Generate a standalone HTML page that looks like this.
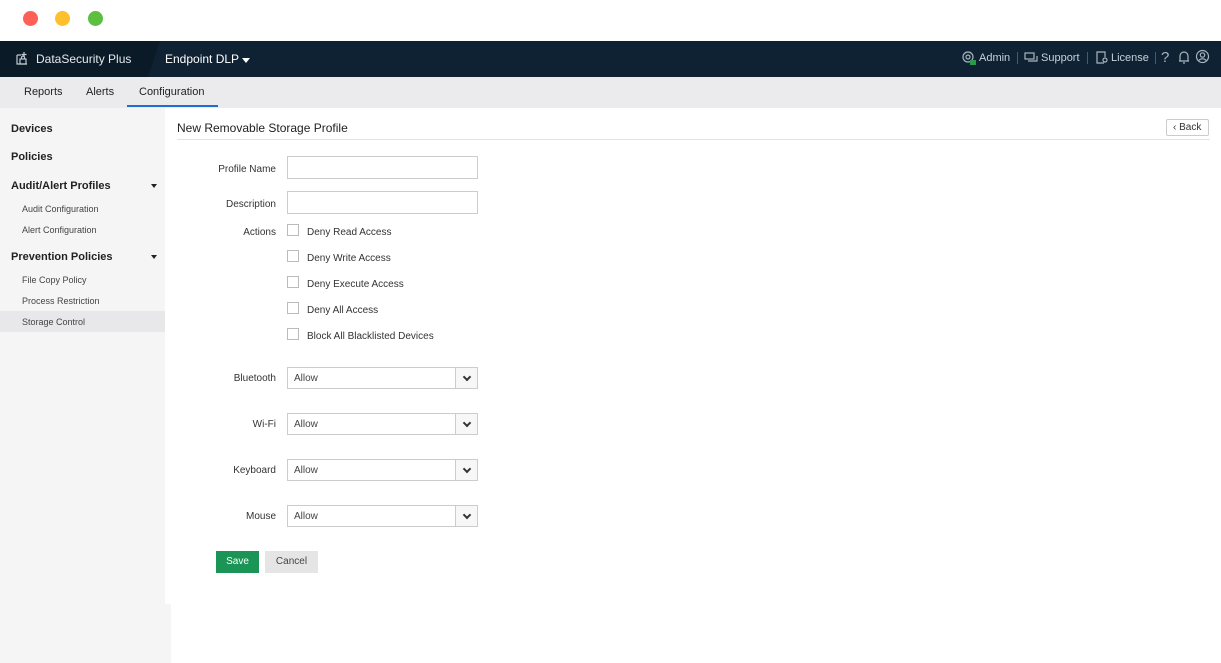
<!DOCTYPE html>
<html><head><style>
*{margin:0;padding:0;box-sizing:border-box}
body{width:1221px;height:663px;position:relative;background:#fff;font-family:"Liberation Sans",sans-serif;overflow:hidden;color:#222}
.a{position:absolute;white-space:nowrap}
.dot{position:absolute;top:11px;width:15px;height:15px;border-radius:50%}
.hdr{position:absolute;top:41px;left:0;width:1221px;height:36px;background:#0f2233}
.nav{position:absolute;top:77px;left:0;width:1221px;height:31px;background:#ebebee}
.side{position:absolute;top:108px;left:0;width:165px;height:496px;background:#f5f5f5}
.side2{position:absolute;top:604px;left:0;width:171px;height:59px;background:#f5f5f5}
.lbl{position:absolute;font-size:10px;color:#333;text-align:right;width:100px;left:176px}
.in{position:absolute;left:287px;width:191px;height:23px;border:1px solid #ccc;background:#fff}
.cb{position:absolute;left:287px;width:12px;height:12px;border:1px solid #bbb;background:#fff}
.ct{position:absolute;left:307px;font-size:10px;color:#333}
.sel{position:absolute;left:287px;width:191px;height:22px;border:1px solid #ccc;background:#fff;font-size:10px;color:#444;padding:5px 0 0 6px}
.sel i{position:absolute;right:0;top:0;width:22px;height:20px;border-left:1px solid #ccc;background:#f7f7f7}
.sel i:after{content:"";position:absolute;left:8px;top:6px;width:4px;height:4px;border-right:2px solid #333;border-bottom:2px solid #333;transform:rotate(45deg)}
.sh{position:absolute;left:11px;font-size:11px;font-weight:bold;color:#222}
.si{position:absolute;left:22px;font-size:9px;color:#444}
.tri{position:absolute;left:151px;width:0;height:0;border-left:3.5px solid transparent;border-right:3.5px solid transparent;border-top:4px solid #222}
.hw{color:#c8d0d8;font-size:11px;top:52px}
</style></head><body>
<div class="dot" style="left:23px;background:#fe5f57"></div>
<div class="dot" style="left:55px;background:#fec02e"></div>
<div class="dot" style="left:88px;background:#5cbf3f"></div>
<div class="hdr"></div>
<svg class="a" style="left:0;top:41px" width="160" height="36"><polygon points="0,0 160,0 148,36 0,36" fill="#0b1a27"/></svg>
<svg class="a" style="left:15px;top:50px" width="16" height="16" fill="none" stroke="#bfc7cf" stroke-width="1.2"><path d="M2 5v9h10M2 5h4M9 2v5M6.5 4.5h5"/><rect x="5" y="9" width="6" height="5"/><path d="M6.5 9V7.5a1.5 1.5 0 013 0V9"/></svg>
<div class="a" style="left:36px;top:52px;font-size:12px;color:#e5e9ee">DataSecurity Plus</div>
<div class="a" style="left:165px;top:52px;font-size:12px;color:#fff">Endpoint DLP</div>
<div class="a" style="left:242px;top:58px;border-left:4px solid transparent;border-right:4px solid transparent;border-top:5px solid #fff"></div>
<svg class="a" style="left:961px;top:50px" width="16" height="16" fill="none" stroke="#aab4be" stroke-width="1.2"><circle cx="7" cy="7" r="5"/><circle cx="7" cy="7" r="2"/><rect x="9" y="10" width="6" height="5" fill="#2a9a4a" stroke="none"/></svg>
<div class="a hw" style="left:979px">Admin</div>
<div class="a" style="left:1017px;top:52px;width:1px;height:12px;background:#556"></div>
<svg class="a" style="left:1024px;top:51px" width="14" height="14" fill="none" stroke="#aab4be" stroke-width="1.2"><rect x="1" y="2" width="9" height="6"/><path d="M4 10h9V5"/></svg>
<div class="a hw" style="left:1041px">Support</div>
<div class="a" style="left:1087px;top:52px;width:1px;height:12px;background:#556"></div>
<svg class="a" style="left:1095px;top:50px" width="14" height="15" fill="none" stroke="#aab4be" stroke-width="1.2"><path d="M9 13H2V2h8v5"/><circle cx="10" cy="10" r="2"/></svg>
<div class="a hw" style="left:1111px">License</div>
<div class="a" style="left:1155px;top:52px;width:1px;height:12px;background:#556"></div>
<div class="a" style="left:1161px;top:49px;font-size:15px;color:#aab4be">?</div>
<svg class="a" style="left:1177px;top:50px" width="14" height="15" fill="none" stroke="#aab4be" stroke-width="1.2"><path d="M3 11V6a4 4 0 018 0v5zM2 11h10M6 13h2"/></svg>
<svg class="a" style="left:1195px;top:49px" width="15" height="15" fill="none" stroke="#aab4be" stroke-width="1.2"><circle cx="7.5" cy="7.5" r="6"/><circle cx="7.5" cy="6" r="2.2"/><path d="M3.5 12a4.5 4 0 018 0"/></svg>
<div class="nav"></div>
<div class="a" style="left:24px;top:86px;font-size:11px;color:#222">Reports</div>
<div class="a" style="left:86px;top:86px;font-size:11px;color:#222">Alerts</div>
<div class="a" style="left:139px;top:86px;font-size:11px;color:#222">Configuration</div>
<div class="a" style="left:127px;top:105px;width:91px;height:2px;background:#1f6fd0"></div>
<div class="side"></div><div class="side2"></div>
<div class="sh" style="top:123px">Devices</div>
<div class="sh" style="top:151px">Policies</div>
<div class="sh" style="top:180px">Audit/Alert Profiles</div><div class="tri" style="top:184px"></div>
<div class="si" style="top:204px">Audit Configuration</div>
<div class="si" style="top:225px">Alert Configuration</div>
<div class="sh" style="top:251px">Prevention Policies</div><div class="tri" style="top:255px"></div>
<div class="si" style="top:275px">File Copy Policy</div>
<div class="si" style="top:296px">Process Restriction</div>
<div class="a" style="left:0;top:311px;width:165px;height:21px;background:#e8e8ea"></div>
<div class="si" style="top:317px">Storage Control</div>
<div class="a" style="left:177px;top:121px;font-size:12px;color:#222">New Removable Storage Profile</div>
<div class="a" style="left:177px;top:139px;width:1033px;height:1px;background:#e3e3e3"></div>
<div class="a" style="left:1166px;top:119px;width:43px;height:17px;border:1px solid #ccc;border-radius:2px;font-size:10px;color:#333;padding:2px 0 0 6px">‹ Back</div>
<div class="lbl" style="top:164px">Profile Name</div><div class="in" style="top:156px"></div>
<div class="lbl" style="top:199px">Description</div><div class="in" style="top:191px"></div>
<div class="lbl" style="top:227px">Actions</div>
<div class="cb" style="top:224px"></div><div class="ct" style="top:227px">Deny Read Access</div>
<div class="cb" style="top:250px"></div><div class="ct" style="top:253px">Deny Write Access</div>
<div class="cb" style="top:276px"></div><div class="ct" style="top:279px">Deny Execute Access</div>
<div class="cb" style="top:302px"></div><div class="ct" style="top:305px">Deny All Access</div>
<div class="cb" style="top:328px"></div><div class="ct" style="top:331px">Block All Blacklisted Devices</div>
<div class="lbl" style="top:373px">Bluetooth</div><div class="sel" style="top:367px">Allow<i></i></div>
<div class="lbl" style="top:419px">Wi-Fi</div><div class="sel" style="top:413px">Allow<i></i></div>
<div class="lbl" style="top:465px">Keyboard</div><div class="sel" style="top:459px">Allow<i></i></div>
<div class="lbl" style="top:511px">Mouse</div><div class="sel" style="top:505px">Allow<i></i></div>
<div class="a" style="left:216px;top:551px;width:43px;height:22px;background:#1a9555;color:#fff;font-size:10px;text-align:center;line-height:22px">Save</div>
<div class="a" style="left:265px;top:551px;width:53px;height:22px;background:#e5e5e5;color:#444;font-size:10px;text-align:center;line-height:22px">Cancel</div>
</body></html>
